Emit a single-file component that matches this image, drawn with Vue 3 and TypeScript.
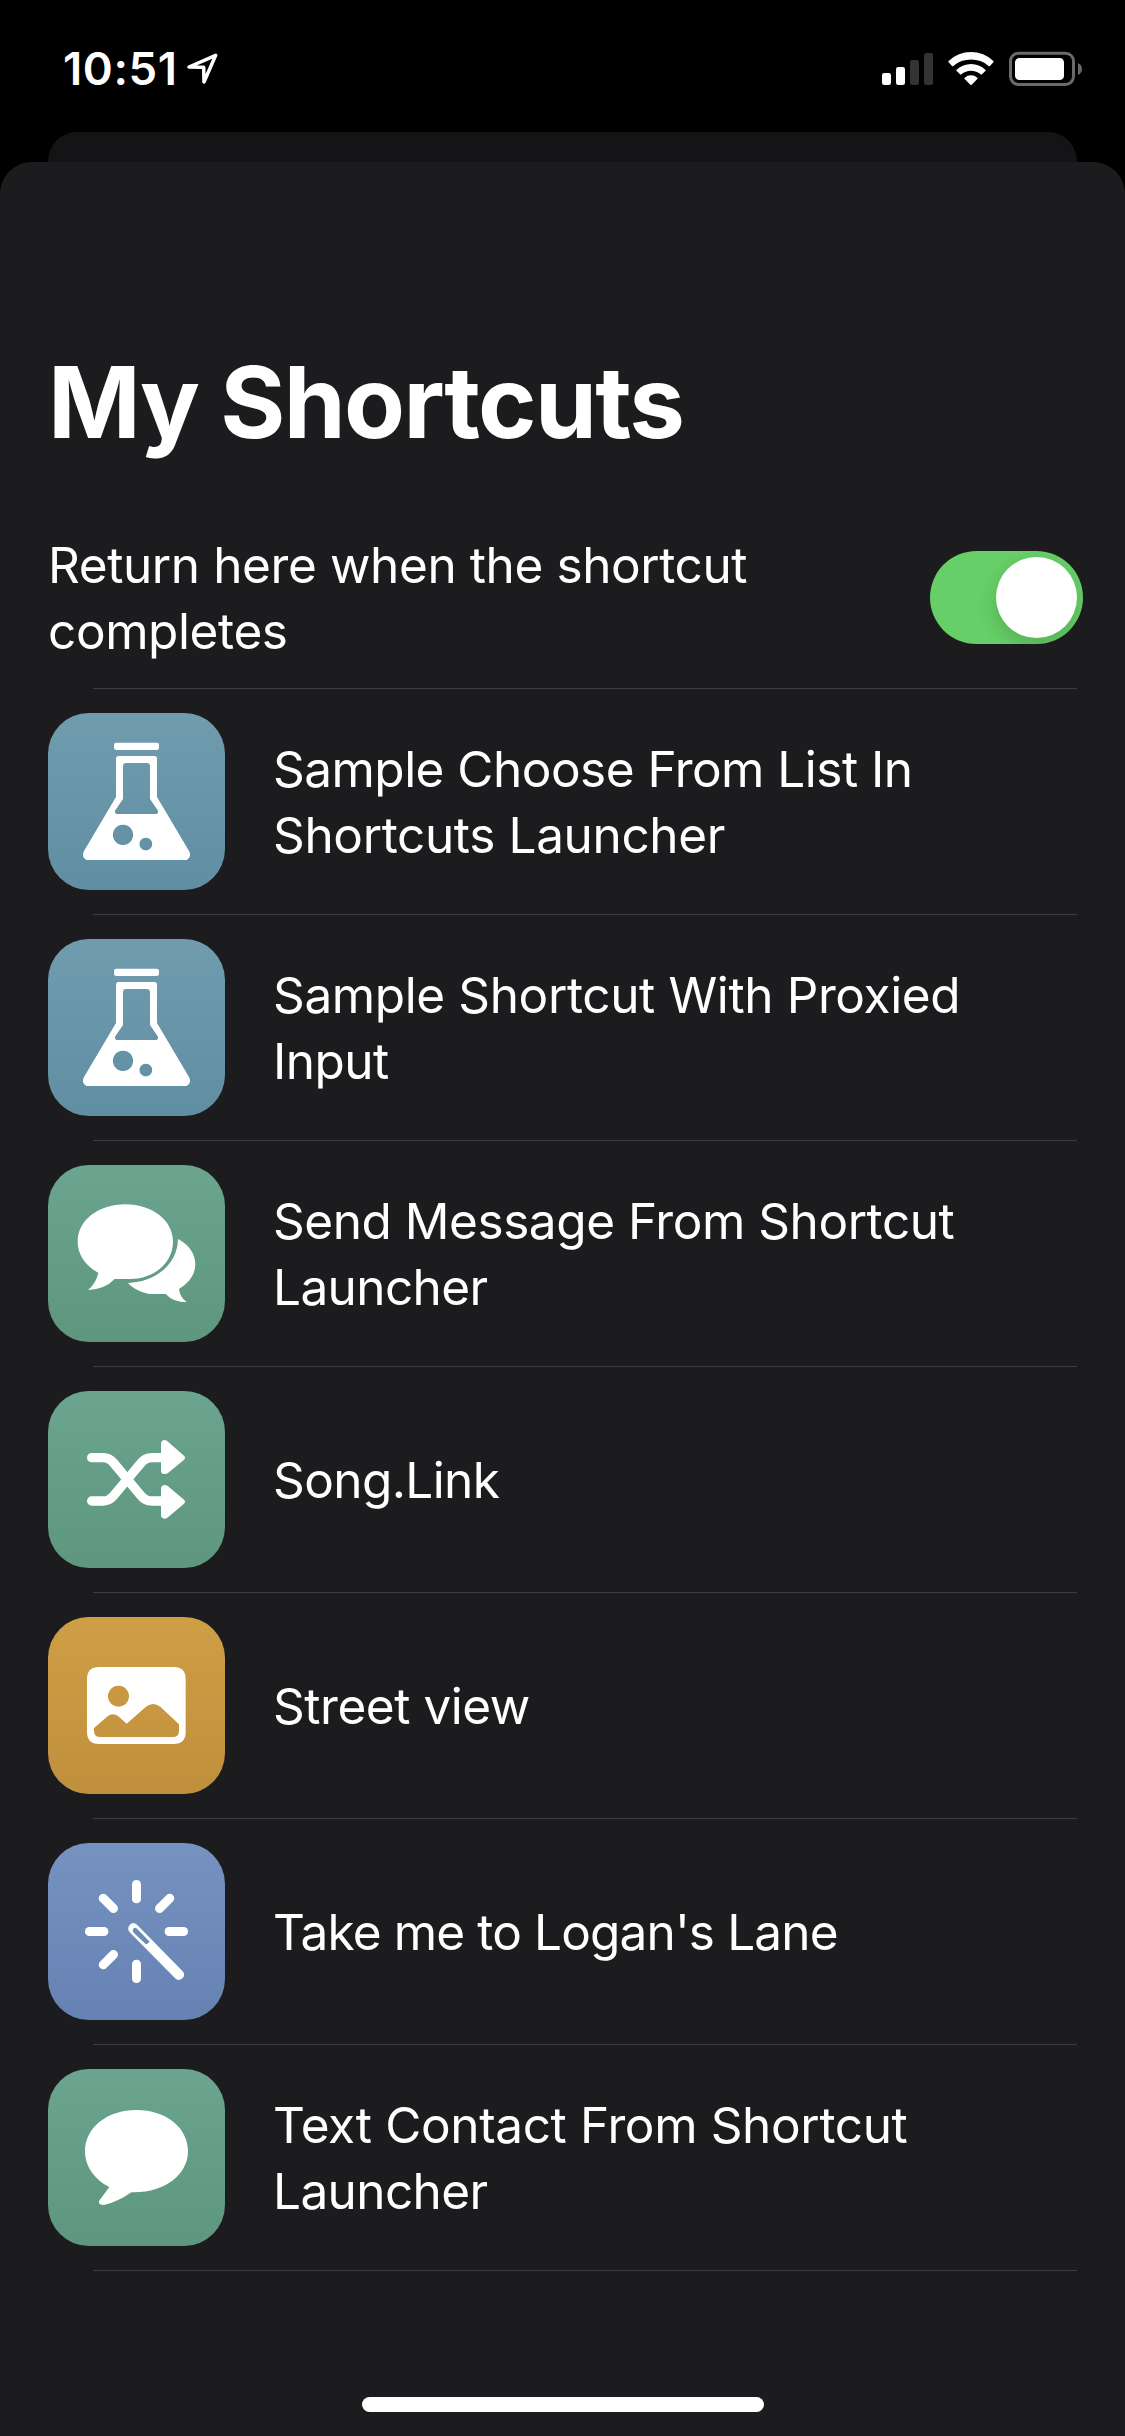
<script setup lang="ts">
import { ref } from 'vue'

type Glyph = 'flask' | 'bubbles' | 'shuffle' | 'photo' | 'wand' | 'bubble'
type Tint = 'teal' | 'green' | 'gold' | 'blue'

interface Line {
  text: string
  tracking: number
}

interface Shortcut {
  lines: Line[]
  glyph: Glyph
  tint: Tint
}

const returnHere = ref(true)

// tracking is the letter spacing of the line, in pixels
const shortcuts: Shortcut[] = [
  {
    lines: [
      { text: 'Sample Choose From List In', tracking: -0.52 },
      { text: 'Shortcuts Launcher', tracking: -0.36 },
    ],
    glyph: 'flask',
    tint: 'teal',
  },
  {
    lines: [
      { text: 'Sample Shortcut With Proxied', tracking: -0.38 },
      { text: 'Input', tracking: -0.5 },
    ],
    glyph: 'flask',
    tint: 'teal',
  },
  {
    lines: [
      { text: 'Send Message From Shortcut', tracking: -0.45 },
      { text: 'Launcher', tracking: -0.6 },
    ],
    glyph: 'bubbles',
    tint: 'green',
  },
  { lines: [{ text: 'Song.Link', tracking: -0.6 }], glyph: 'shuffle', tint: 'green' },
  { lines: [{ text: 'Street view', tracking: -0.45 }], glyph: 'photo', tint: 'gold' },
  { lines: [{ text: "Take me to Logan's Lane", tracking: -0.85 }], glyph: 'wand', tint: 'blue' },
  {
    lines: [
      { text: 'Text Contact From Shortcut', tracking: -0.36 },
      { text: 'Launcher', tracking: -0.6 },
    ],
    glyph: 'bubble',
    tint: 'green',
  },
]

const rays = [0, 45, 90, 180, 225, 270, 315]
</script>

<template>
  <div class="screen">
    <header class="status">
      <div class="clock">
        <span class="time">10:51</span>
        <svg class="location" viewBox="561 159 93 93" aria-hidden="true">
          <path d="M567 201 L647 166 L612 246 L611 202 Z" fill="none" stroke="#fff" stroke-width="10.5" stroke-linejoin="round" />
        </svg>
      </div>
      <div class="indicators">
        <svg class="signal" viewBox="246 153 153 105" aria-hidden="true">
          <rect x="246" y="219" width="27" height="36" rx="7" fill="#fff" />
          <rect x="288" y="201" width="27" height="54" rx="7" fill="#fff" />
          <rect x="330" y="180" width="27" height="75" rx="7" fill="#333" />
          <rect x="372" y="159" width="27" height="96" rx="7" fill="#333" />
        </svg>
        <svg class="wifi" viewBox="444 153 138 105" fill="#fff" aria-hidden="true">
          <path d="M446 183 A97 97 0 0 1 580 183 Q582 185 580 187 L570 198 Q568 200 566 198 A81 81 0 0 0 460 198 Q458 200 456 198 L446 187 Q444 185 446 183 Z" />
          <path d="M470 209 A62 62 0 0 1 556 209 Q558 211 556 213 L546 223 Q544 225 542 223 A45 45 0 0 0 484 223 Q482 225 480 223 L470 213 Q468 211 470 209 Z" />
          <path d="M494 233 A29 29 0 0 1 532 233 Q534 235 532 237 L515 254 Q513 256 511 254 L494 237 Q492 235 494 233 Z" />
        </svg>
        <svg class="battery" viewBox="627 153 219 105" aria-hidden="true">
          <rect x="631.5" y="159.500" width="189" height="94" rx="24" fill="none" stroke="#6a6a6a" stroke-width="9" />
          <rect x="645" y="174" width="147" height="66" rx="13" fill="#fff" />
          <path d="M834 189 Q846 195 846 207 Q846 219 834 225 Z" fill="#6a6a6a" />
        </svg>
      </div>
    </header>

    <div class="back-card"></div>

    <main class="sheet">
      <h1 class="title">My Shortcuts</h1>

      <section class="row setting">
        <p class="setting-label">Return here when the shortcut<br />completes</p>
        <button
          class="switch"
          :class="{ on: returnHere }"
          type="button"
          role="switch"
          :aria-checked="returnHere"
          aria-label="Return here when the shortcut completes"
          @click="returnHere = !returnHere"
        >
          <span class="knob"></span>
        </button>
      </section>

      <section v-for="item in shortcuts" :key="item.lines[0].text" class="row">
        <div class="tile" :class="item.tint">
          <svg v-if="item.glyph === 'flask'" class="glyph" viewBox="54 39 531 531" fill="#fff">
            <rect x="252" y="128" width="135" height="22" rx="7" />
            <path
              fill-rule="evenodd"
              d="M266 168 H373 Q381 168 381 176 V291 L477 453 Q486 470 470 480 H169 Q153 470 162 453 L258 291 V176 Q258 168 266 168 Z
                 M287 189 Q279 190 279 197 V297 L258 328 Q251 337 259 342 H380 Q388 337 381 328 L360 297 V197 Q360 190 352 189 Z
                 M279 374 a30.500 30.500 0 1 0 0.010 0 Z
                 M347.500 413 a19 19 0 1 0 0.010 0 Z"
            />
          </svg>

          <svg v-else-if="item.glyph === 'bubbles'" class="glyph" viewBox="54 45 531 531" fill="#fff">
            <path d="M286 163 C368 163 429 212 429 275 C429 336 375 387 300 387 H254 Q225 418 174 420 Q198 400 205 368 C168 348 143 315 143 275 C143 212 204 163 286 163 Z" />
            <path d="M444 267 C476 283 496 311 496 343 C496 373 477 399 447 417 Q449 440 470 457 Q430 457 407 432 H360 C335 428 310 417 294 399 C376 396 443 343 444 267 Z" />
          </svg>

          <svg v-else-if="item.glyph === 'shuffle'" class="glyph" viewBox="54 48 531 531" fill="#fff">
            <g fill="none" stroke="#fff" stroke-width="28" stroke-linecap="round">
              <path d="M185 248 H220 Q238 248 251 264 L333 362 Q346 378 366 378 H400" />
              <path d="M185 378 H220 Q238 378 251 362 L333 264 Q346 248 366 248 H400" />
            </g>
            <path d="M393 203 Q395 196 403 195 Q410 195 414 200 L462 242 Q468 248 462 254 L414 294 Q409 298 402 297 Q395 297 393 290 Z" />
            <path d="M393 338 Q395 331 403 330 Q410 330 414 334 L462 374 Q468 380 462 386 L414 427 Q409 432 402 431 Q395 430 393 424 Z" />
          </svg>

          <svg v-else-if="item.glyph === 'photo'" class="glyph" viewBox="54 51 531 531" fill="#fff">
            <path
              fill-rule="evenodd"
              d="M207 201 H431 Q467 201 467 237 V396 Q467 432 431 432 H207 Q171 432 171 396 V237 Q171 201 207 201 Z
                 M265.500 257 a31.500 31.500 0 1 0 0.010 0 Z
                 M192 384 L231 350 Q248 336 265 349 L290 371 L347 321 Q369 303 391 320 L447 373 V392 Q447 411 428 411 H211 Q192 411 192 392 Z"
            />
          </svg>

          <svg v-else-if="item.glyph === 'wand'" class="glyph" viewBox="54 54 531 531" fill="#fff">
            <rect
              v-for="angle in rays"
              :key="angle"
              x="306"
              y="165"
              width="27"
              height="70"
              rx="13"
              :transform="`rotate(${angle} 319.500 319.500)`"
            />
            <path
              fill-rule="evenodd"
              d="M299 300 Q309 289 321 299 L458 439 Q466 448 460 457 Q450 471 437 461 L299 322 Q290 311 299 300 Z
                 M310 311 Q306 318 311 323 L347 357 Q349 359 351 357 L359 350 L321 311 Q315 306 310 311 Z"
            />
          </svg>

          <svg v-else class="glyph" viewBox="54 57 531 531" fill="#fff">
            <path d="M319.500 180 C408 180 474 233 474 304 C474 373 405 430 304 427 Q263 456 222 465 Q204 465 207 453 L238 411 C193 389 165 348 165 304 C165 233 231 180 319.500 180 Z" />
          </svg>
        </div>
        <p class="name">
          <span
            v-for="line in item.lines"
            :key="line.text"
            class="line"
            :style="{ letterSpacing: `${line.tracking}px` }"
          >{{ line.text }}</span>
        </p>
      </section>

      <div class="home-indicator"></div>
    </main>
  </div>
</template>

<style>
html,
body {
  margin: 0;
  background: #000;
}
</style>

<style scoped>
.screen {
  width: 1125px;
  height: 2436px;
  display: flex;
  flex-direction: column;
  overflow: hidden;
  background: #000;
  color: #fff;
  font-family: Inter, 'Liberation Sans', sans-serif;
}

.status {
  box-sizing: border-box;
  height: 132px;
  flex: none;
  display: flex;
  justify-content: space-between;
  align-items: flex-start;
  padding: 51px 43px 0 63px;
}

.clock {
  display: flex;
  align-items: flex-start;
}

.time {
  width: 124px;
  font-size: 45.5px;
  font-weight: 600;
  line-height: 36px;
  letter-spacing: 0.6px;
}

.location {
  width: 31px;
  height: 31px;
  margin-top: 2px;
}

.indicators {
  display: flex;
}

.signal {
  width: 51px;
  height: 35px;
  margin-right: 15px;
}

.wifi {
  width: 46px;
  height: 35px;
  margin-right: 15px;
}

.battery {
  width: 73px;
  height: 35px;
}

.back-card {
  height: 30px;
  flex: none;
  margin: 0 48px;
  border-radius: 29px 29px 0 0;
  background: #141416;
}

.sheet {
  flex: 1;
  display: flex;
  flex-direction: column;
  border-radius: 32px 32px 0 0;
  background: #1c1c1e;
}

.title {
  margin: 179px 0 45px 48px;
  font-size: 99.5px;
  font-weight: 700;
  line-height: 122px;
  letter-spacing: -1.65px;
}

.row {
  box-sizing: border-box;
  height: 226px;
  flex: none;
  display: flex;
  align-items: center;
  padding: 0 48px 1px;
  background: linear-gradient(#3d3d40, #3d3d40) 93px 100% / 984px 1px no-repeat;
}

.setting {
  height: 181px;
  justify-content: space-between;
  padding-right: 42px;
}

.setting-label,
.name {
  margin: 0;
  font-size: 49.5px;
  line-height: 66px;
  white-space: nowrap;
}

.setting-label {
  letter-spacing: -0.4px;
}

.name {
  margin-left: 48px;
}

.line {
  display: block;
}

.switch {
  width: 153px;
  height: 93px;
  margin-bottom: 2px;
  padding: 6px;
  border: 0;
  border-radius: 47px;
  overflow: hidden;
  display: flex;
  justify-content: flex-start;
  background: #39393d;
}

.switch.on {
  justify-content: flex-end;
  background: #67cf67;
}

.knob {
  width: 81px;
  height: 81px;
  border-radius: 50%;
  background: #fff;
  box-shadow: 0 8px 20px rgba(0, 0, 0, 0.16);
}

.tile {
  width: 177px;
  height: 177px;
  flex: none;
  border-radius: 41px;
  overflow: hidden;
}

.glyph {
  display: block;
  width: 177px;
  height: 177px;
}

.teal {
  background: linear-gradient(#709cae, #608ea2);
}

.green {
  background: linear-gradient(#6ba58f, #5e967f);
}

.gold {
  background: linear-gradient(#ce9f45, #c08f3d);
}

.blue {
  background: linear-gradient(#7692c0, #6682b3);
}

.home-indicator {
  width: 402px;
  height: 15px;
  margin: auto auto 24px 362px;
  border-radius: 8px;
  background: #fff;
}
</style>
